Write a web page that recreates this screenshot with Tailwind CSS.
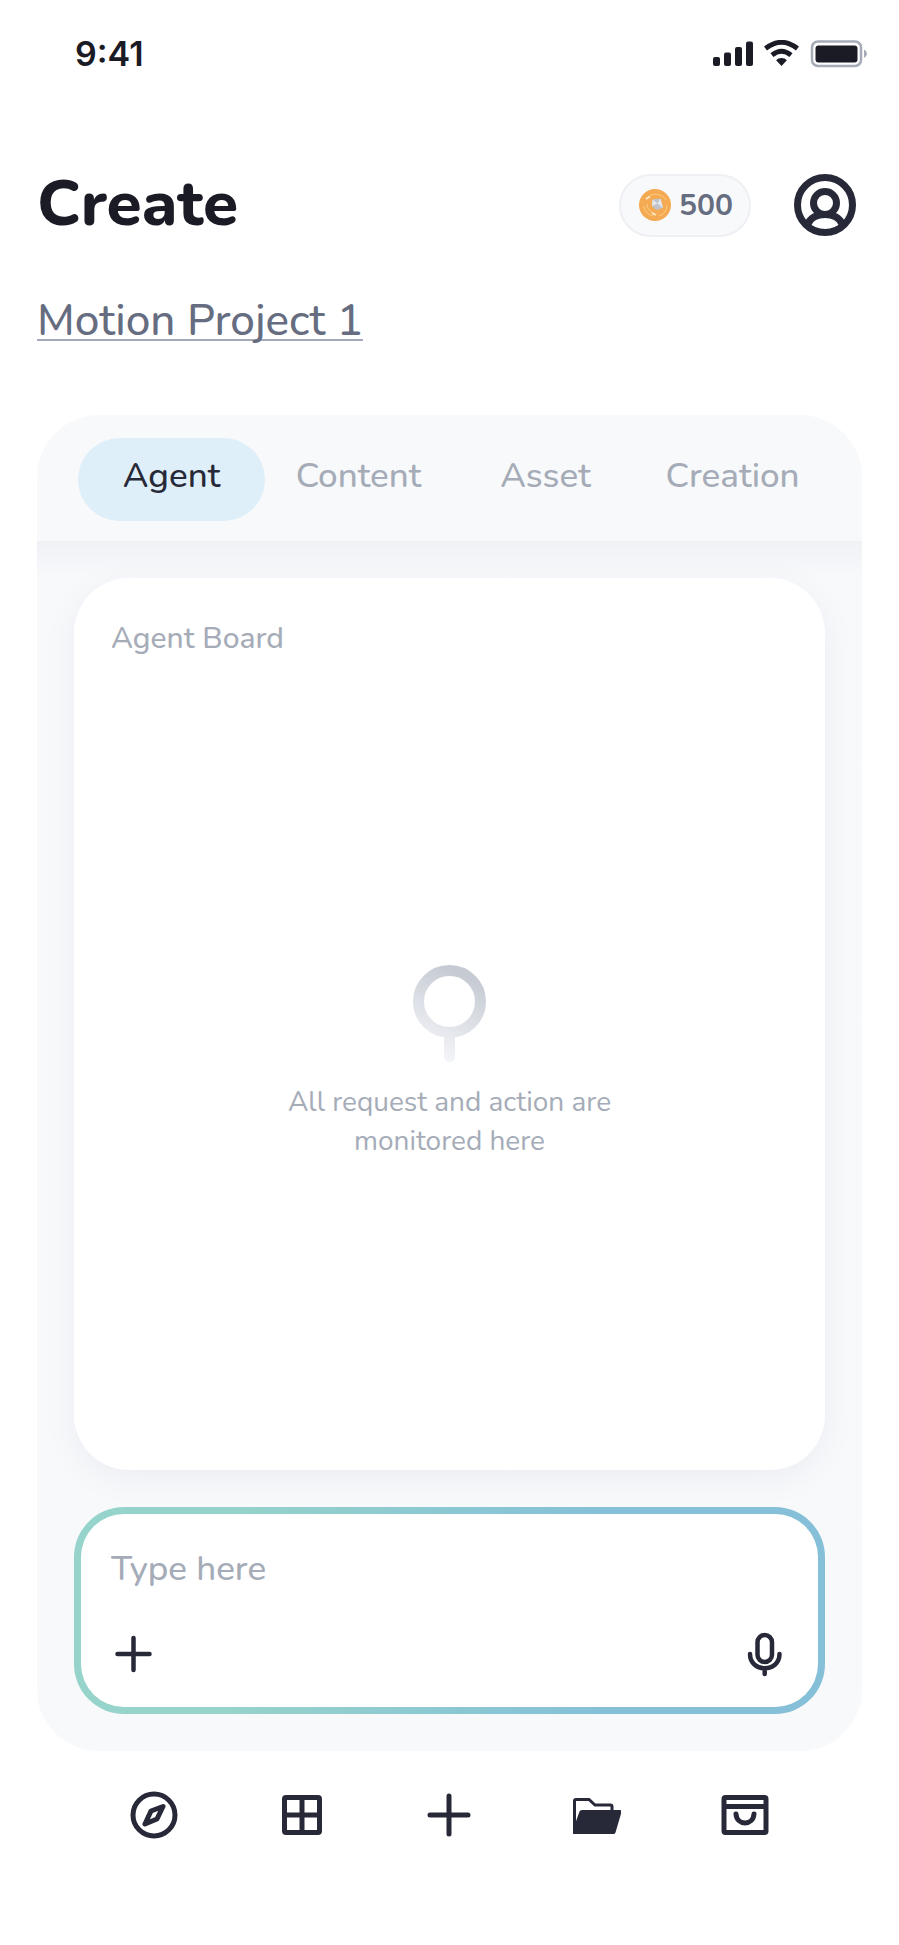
<!DOCTYPE html>
<html lang="en">
<head>
<meta charset="utf-8">
<meta name="viewport" content="width=device-width, initial-scale=1">
<title>Create</title>
<script src="https://cdn.jsdelivr.net/npm/@tailwindcss/browser@4"></script>
</head>
<body class="min-h-screen bg-white font-[Nunito,Lato,sans-serif] text-[#272938]">
<div class="flex min-h-screen flex-col">

  <div class="flex h-[107px] items-center justify-between pr-8 pl-[75px]">
    <span class="font-[Inter,sans-serif] text-[34px] leading-10 font-semibold text-[#1a1b25]">9:41</span>
    <svg class="h-7 w-[156px]" viewBox="0 0 156 28" fill="none" aria-hidden="true">
      <g fill="#1a1b25">
        <rect x="2" y="17" width="7" height="9" rx="2"/><rect x="13" y="12.500" width="7" height="13.500" rx="2"/><rect x="24" y="7" width="7" height="19" rx="2"/><rect x="35" y="1.500" width="7" height="24.500" rx="2"/>
        <path d="M70.500 18q3.400 0 5.400 2.200L70.500 26l-5.400-5.800q2-2.200 5.400-2.200z"/>
      </g>
      <path d="M61 15.200q9.500-8 19 0M54.500 8.500q16-12.500 32 0" stroke="#1a1b25" stroke-width="4.800"/>
      <rect x="101" y="1.500" width="49" height="24.500" rx="6" stroke="#a5acb8" stroke-width="2.500"/>
      <rect x="104.500" y="5.500" width="42" height="17" rx="3" fill="#1a1b25"/>
      <path d="M153 9.500q3 1.500 3 4.300t-3 4.300z" fill="#a5acb8"/>
    </svg>
  </div>

  <header class="mx-[37px] flex h-[130px] items-end justify-between">
    <h1 class="pb-px text-[64px] leading-[64px] font-extrabold text-[#1a1b25]">Create</h1>
    <div class="flex h-16 items-center gap-[43px] pr-[6px]">
      <button type="button" class="flex h-[63px] w-[132px] items-center justify-center gap-2 rounded-full border-2 border-[#eff0f4] bg-[#f8f9fb] pl-[2px] text-[30px] font-bold text-[#666d80]">
        <svg class="size-8" viewBox="0 0 32 32" fill="none" aria-hidden="true">
          <circle cx="16" cy="16" r="16" fill="#f4aa52"/>
          <path d="M9 8a12 12 0 0 1 18 3M28 16a12 12 0 0 1-8 11M4.500 17a12 12 0 0 0 10 10M8 15a9 9 0 0 0 7 9" stroke="#ffcb83" stroke-width="1"/>
          <path d="M7 10l4-2.500M13 24l4 2" stroke="#ffe9c8" stroke-width="1.800"/>
          <path d="M13.500 10.500l8-1L24 19l-7 2-4-4z" fill="#bfc4cc"/><path d="M13.500 10.500l5 4-5.500 2.500zM18.500 14.500l3-5L24 19z" fill="#e4e7eb"/>
        </svg>500</button>
      <button type="button" aria-label="Profile">
        <svg class="size-[62px]" viewBox="0 0 62 62" fill="none" stroke="#272938" stroke-width="7" aria-hidden="true">
          <circle cx="31" cy="31" r="27.500"/><circle cx="31" cy="29" r="11.500"/><path d="M13.500 50.500c3-7 9.500-10 17.500-10s14.500 3 17.500 10"/>
        </svg>
      </button>
    </div>
  </header>

  <div class="mx-[37px] mt-[58px] flex h-[46px] items-end">
    <a href="#" class="border-b-2 border-[#a5a9b6] text-[44px] leading-9 font-medium text-[#666d80]">Motion Project 1</a>
  </div>

  <main class="mx-[37px] mt-[74px] flex flex-1 flex-col overflow-hidden rounded-[62px] bg-[#f8f9fb]">
    <nav class="grid h-[126px] shrink-0 grid-cols-4 pt-[23px] pr-9 pb-5 pl-[41px] text-[35px] font-medium text-[#a5acb8]" aria-label="Project sections">
      <button type="button" class="rounded-full bg-[#deeff9] pb-1.5 text-[#272938]">Agent</button>
      <button type="button" class="pb-1.5">Content</button>
      <button type="button" class="pb-1.5">Asset</button>
      <button type="button" class="pb-1.5">Creation</button>
    </nav>
    <div class="flex flex-1 flex-col gap-[37px] bg-linear-to-b from-[#f0f1f5] to-[#f8f9fb] to-[36px] p-[37px]">
      <section class="flex flex-1 flex-col rounded-[55px] bg-white px-[37px] pt-[41px] shadow-[0_8px_36px_rgba(26,27,80,0.05)]">
        <h2 class="text-[30px] leading-10 font-medium text-[#a5acb8]">Agent Board</h2>
        <div class="flex flex-1 flex-col items-center justify-center pb-1">
          <svg class="h-[97px] w-[73px]" viewBox="0 0 73 97" fill="none" aria-hidden="true">
            <defs><linearGradient id="pin" x1="55" y1="12" x2="20" y2="92" gradientUnits="userSpaceOnUse"><stop stop-color="#c6cbd3"/><stop offset="1" stop-color="#f5f6fa"/></linearGradient></defs>
            <path d="M31 68h11v23.500a5.500 5.500 0 0 1-11 0z" fill="url(#pin)"/>
            <circle cx="36.500" cy="36.500" r="31" stroke="url(#pin)" stroke-width="11"/>
          </svg>
          <p class="mt-[21px] text-center text-[28px] leading-[39px] text-[#a5acb8]">All request and action are<br>monitored here</p>
        </div>
      </section>
      <form class="rounded-[50px] bg-linear-to-r from-[#96d3ca] from-20% to-[#85c0d8] to-70% p-[7px]">
        <div class="flex h-[193px] flex-col justify-between rounded-[43px] bg-white px-[30px] pt-8 pb-[30px]">
          <input type="text" aria-label="Message" placeholder="Type here" class="w-full text-[35px] leading-[46px] font-medium text-[#272938] outline-none placeholder:text-[#a5acb8] placeholder:opacity-100">
          <div class="flex items-center justify-between">
            <button type="button" aria-label="Add attachment">
              <svg class="size-[46px]" viewBox="0 0 46 46" fill="none" stroke="#272938" stroke-width="4.500" stroke-linecap="round" aria-hidden="true"><path d="M22.500 7v32M6.500 23h32"/></svg>
            </button>
            <button type="button" aria-label="Record voice">
              <svg class="size-[46px]" viewBox="0 0 46 46" fill="none" stroke="#272938" stroke-width="4.500" stroke-linecap="round" aria-hidden="true"><rect x="15.500" y="4" width="14.500" height="27" rx="7.250"/><path d="M8 23c0 19 29.500 19 29.500 0M22.700 38v5"/></svg>
            </button>
          </div>
        </div>
      </form>
    </div>
  </main>

  <nav class="mx-auto grid h-[194px] w-full max-w-[738px] grid-cols-5 items-start justify-items-center pt-10" aria-label="Main">
    <a href="#" aria-label="Explore"><svg class="size-12" viewBox="0 0 48 48" fill="none" stroke="#272938" stroke-width="5" aria-hidden="true"><circle cx="24" cy="24" r="21"/><path d="M33 15.500L21 20l-6 13 12-5z" stroke-linejoin="round"/></svg></a>
    <a href="#" aria-label="Dashboard"><svg class="size-12" viewBox="0 0 48 48" fill="none" stroke="#272938" stroke-width="5" aria-hidden="true"><rect x="6.500" y="6.500" width="35" height="35" rx="1.500"/><path d="M24 6v36M6 24h36"/></svg></a>
    <a href="#" aria-label="New"><svg class="size-12" viewBox="0 0 48 48" fill="none" stroke="#272938" stroke-width="5" stroke-linecap="round" aria-hidden="true"><path d="M24 5v38M5 24h38"/></svg></a>
    <a href="#" aria-label="Files"><svg class="size-12" viewBox="0 0 48 48" fill="none" aria-hidden="true"><path d="M1.500 41V10q0-1.500 1.500-1.500h13l6 5.500h15.500q1.500 0 1.500 1.500V22" stroke="#272938" stroke-width="3"/><path d="M9 19h38q2 0 1.500 2l-6 20.500q-.5 1.500-2 1.500H0V38l2-5 4.500-12.500q.5-1.500 2.500-1.500z" fill="#272938"/></svg></a>
    <a href="#" aria-label="Store"><svg class="size-12" viewBox="0 0 48 48" fill="none" stroke="#272938" stroke-width="5" aria-hidden="true"><rect x="3" y="6.500" width="42" height="35" rx="1.500"/><path d="M3 15.500h42"/><path d="M15 23c1 12 17 12 18 0" stroke-linecap="round"/></svg></a>
  </nav>
</div>
</body>
</html>
